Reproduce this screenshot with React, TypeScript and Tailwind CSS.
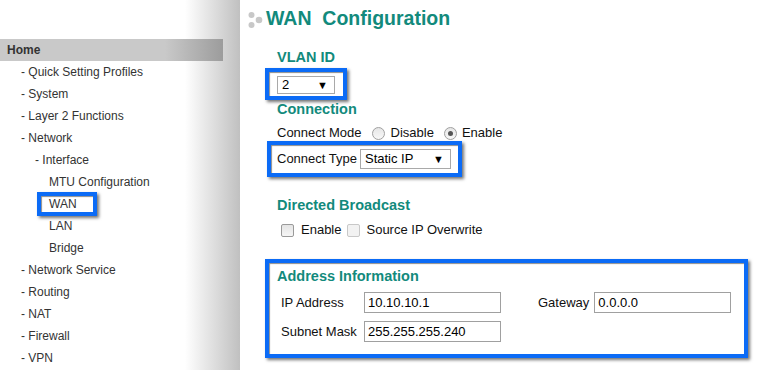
const teal = 'text-[#128a7c]'

const navItems = [
  { label: '- Quick Setting Profiles', indent: 'pl-[21px]' },
  { label: '- System', indent: 'pl-[21px]' },
  { label: '- Layer 2 Functions', indent: 'pl-[21px]' },
  { label: '- Network', indent: 'pl-[21px]' },
  { label: '- Interface', indent: 'pl-[35px]' },
  { label: 'MTU Configuration', indent: 'pl-[49px]' },
  { label: 'WAN', indent: 'pl-[37px]', active: true },
  { label: 'LAN', indent: 'pl-[49px]' },
  { label: 'Bridge', indent: 'pl-[49px]' },
  { label: '- Network Service', indent: 'pl-[21px]' },
  { label: '- Routing', indent: 'pl-[21px]' },
  { label: '- NAT', indent: 'pl-[21px]' },
  { label: '- Firewall', indent: 'pl-[21px]' },
  { label: '- VPN', indent: 'pl-[21px]' },
]

const blueBox = 'border-4 border-[#0b6bf6] shadow-[2px_2px_3px_rgba(0,0,0,0.55),inset_1px_1px_1px_rgba(0,0,0,0.45)]'

const Select = ({ value, className }: { value: string; className: string }) => (
  <div className={`flex items-center justify-between border border-[#a9a9a9] bg-white pl-[4px] pr-[6px] text-[13px] text-black ${className}`}>
    <span>{value}</span>
    <span className="text-[11px] leading-none">▼</span>
  </div>
)

const Radio = ({ checked }: { checked?: boolean }) => (
  <span className="flex h-[13px] w-[13px] items-center justify-center rounded-full border border-[#a0a0a0] bg-[linear-gradient(to_bottom,#e6e6e6,#f8f8f8)]">
    {checked && <span className="h-[5px] w-[5px] rounded-full bg-[#555]" />}
  </span>
)

const Checkbox = ({ disabled }: { disabled?: boolean }) => (
  <span
    className={`h-[13px] w-[13px] rounded-[2px] border ${
      disabled ? 'border-[#c8c8c8] bg-[#f2f2f2]' : 'border-[#9a9a9a] bg-[linear-gradient(to_bottom,#e4e4e4,#f6f6f6)]'
    }`}
  />
)

const Field = ({ value }: { value: string }) => (
  <div className="flex h-[21px] w-[137px] items-center border border-[#a0a0a0] bg-white pl-[3px] text-[13px] text-black">{value}</div>
)

export default function App() {
  return (
    <div className="flex h-[370px] w-[767px] overflow-hidden bg-white font-['Liberation_Sans',Arial,sans-serif]">
      <aside className="flex w-[240px] shrink-0 flex-col bg-[linear-gradient(to_right,#ffffff_185px,#c0c0c0_240px)] pt-[39px] text-[12px] text-[#333]">
        <div className="flex h-[22px] w-[223px] items-center bg-[linear-gradient(to_right,#c9c9c9_165px,#9c9c9c)] pl-[7px] font-bold">
          Home
        </div>
        {navItems.map((item) => (
          <div key={item.label} className={`flex h-[22px] items-center ${item.indent}`}>
            {item.active ? (
              <span className={`flex h-[24px] w-[60px] items-center bg-white pl-[8px] ${blueBox}`}>{item.label}</span>
            ) : (
              item.label
            )}
          </div>
        ))}
      </aside>

      <main className="flex flex-1 flex-col">
        <div className="flex h-[38px] items-center pl-[7px]">
          <svg width="16" height="18" viewBox="0 0 16 18">
            <circle cx="4.5" cy="5" r="3" fill="#c8c8c8" />
            <circle cx="4.5" cy="15" r="3" fill="#c8c8c8" />
            <circle cx="12" cy="10" r="3.3" fill="#c8c8c8" />
          </svg>
          <h1 className={`ml-[3px] text-[19.5px] font-bold ${teal}`}>WAN&nbsp; Configuration</h1>
        </div>

        <div className="flex flex-col pl-[25px]">
          <div className={`mt-[10px] flex h-[20px] items-center pl-[12px] text-[14.5px] font-bold ${teal}`}>VLAN ID</div>
          <div className={`flex w-[82px] bg-white px-[8px] pt-[4px] pb-[2px] ${blueBox}`}>
            <Select value="2" className="h-[18px] w-[58px]" />
          </div>

          <div className={`flex h-[20px] items-center pl-[12px] text-[14.5px] font-bold ${teal}`}>Connection</div>
          <div className="mt-[5px] flex h-[16px] items-center pl-[12px] text-[13px] text-[#111]">
            <span>Connect Mode</span>
            <span className="ml-[10px]"><Radio /></span>
            <span className="ml-[6px]">Disable</span>
            <span className="ml-[10px]"><Radio checked /></span>
            <span className="ml-[5px]">Enable</span>
          </div>
          <div className={`ml-[2px] flex h-[36px] w-[195px] items-center bg-white px-[6px] ${blueBox}`}>
            <span className="text-[13px] text-[#111]">Connect Type</span>
            <Select value="Static IP" className="ml-[3px] h-[20px] w-[91px]" />
          </div>

          <div className={`mt-[19px] flex h-[20px] items-center pl-[12px] text-[14.5px] font-bold ${teal}`}>Directed Broadcast</div>
          <div className="mt-[4px] flex h-[20px] items-center pl-[16px] text-[13px] text-[#111]">
            <Checkbox />
            <span className="ml-[7px]">Enable</span>
            <span className="ml-[6px] flex"><Checkbox disabled /></span>
            <span className="ml-[6px]">Source IP Overwrite</span>
          </div>

          <div className={`mt-[19px] flex h-[99px] w-[483px] flex-col bg-white px-[8px] pt-[4px] ${blueBox}`}>
            <div className={`flex h-[20px] items-center text-[14.5px] font-bold ${teal}`}>Address Information</div>
            <div className="mt-[5px] flex items-center pl-[4px] text-[13px] text-[#111]">
              <span className="w-[83px]">IP Address</span>
              <Field value="10.10.10.1" />
              <span className="ml-[37px]">Gateway</span>
              <span className="ml-[5px]"><Field value="0.0.0.0" /></span>
            </div>
            <div className="mt-[8px] flex items-center pl-[4px] text-[13px] text-[#111]">
              <span className="w-[83px]">Subnet Mask</span>
              <Field value="255.255.255.240" />
            </div>
          </div>
        </div>
      </main>
    </div>
  )
}
